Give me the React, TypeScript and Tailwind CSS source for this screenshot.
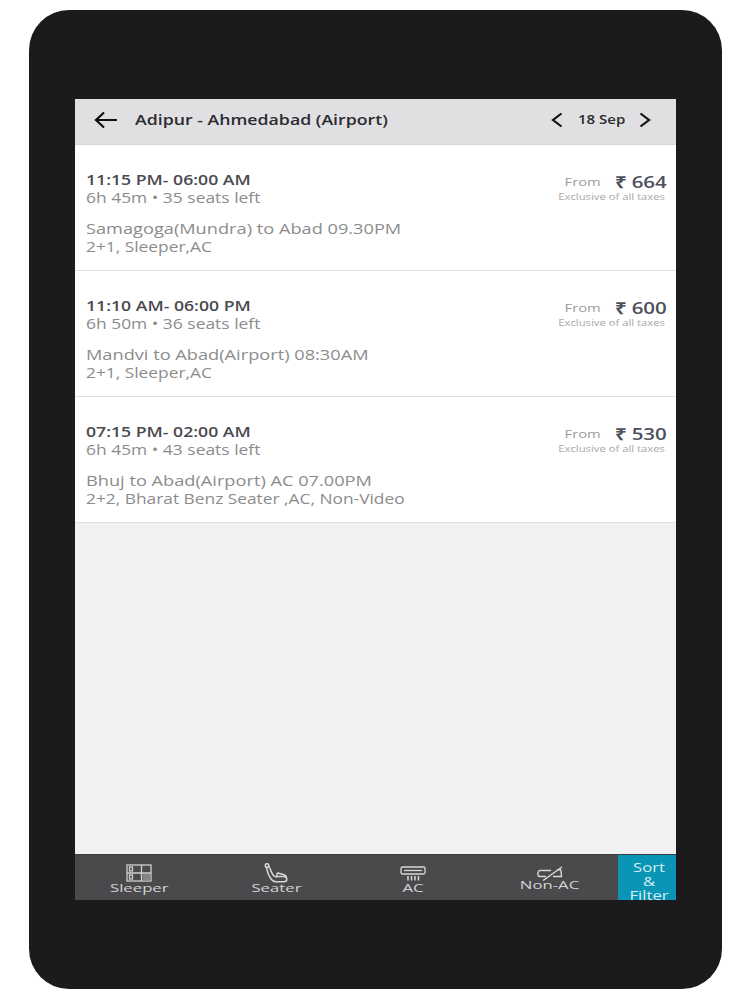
const trips = [
  {
    time: "11:15 PM- 06:00 AM",
    meta: "6h 45m • 35 seats left",
    name: "Samagoga(Mundra) to Abad 09.30PM",
    bus: "2+1, Sleeper,AC",
    price: "664",
  },
  {
    time: "11:10 AM- 06:00 PM",
    meta: "6h 50m • 36 seats left",
    name: "Mandvi to Abad(Airport) 08:30AM",
    bus: "2+1, Sleeper,AC",
    price: "600",
  },
  {
    time: "07:15 PM- 02:00 AM",
    meta: "6h 45m • 43 seats left",
    name: "Bhuj to Abad(Airport) AC 07.00PM",
    bus: "2+2, Bharat Benz Seater ,AC, Non-Video",
    price: "530",
  },
];

function SleeperIcon() {
  return (
    <svg width="26" height="18" viewBox="0 0 26 18" fill="none" stroke="#d0d0d0" strokeWidth="1.300">
      <rect x="1" y="1" width="24" height="16" />
      <path d="M1 9h24M15.500 1v16" />
      <rect x="3.500" y="3" width="3" height="4" />
      <rect x="3.500" y="11" width="3" height="4" />
      <rect x="16.500" y="10" width="8" height="6.500" fill="#858585" stroke="none" />
    </svg>
  );
}

function SeaterIcon() {
  return (
    <svg width="24" height="20" viewBox="0 0 24 20" fill="none" stroke="#d8d8d8" strokeWidth="1.500" strokeLinejoin="round">
      <circle cx="3" cy="2.500" r="1.800" />
      <path d="M2.500 5c.8 4 2 7.500 4.500 11 1.200 1.700 2.500 2.700 5 2.700h8c1.700 0 2.800-1.100 2.800-2.500 0-1.700-1.200-2.700-2.800-2.700h-6" />
      <path d="M5 3.500c1.500 3 2.500 6.500 4.500 9 1 1.200 2.500 1.500 4 1.500M13.500 14c-1-1.500-1-3.500.5-4l6 1.800c1.200.4 2 1.100 2.300 2.200" />
    </svg>
  );
}

function AcIcon() {
  return (
    <svg width="26" height="15" viewBox="0 0 26 15" fill="none" stroke="#d8d8d8" strokeWidth="1.300">
      <path d="M2.500 1h21c.8 0 1.500.7 1.500 1.500v4c0 .8-.7 1.500-1.500 1.500h-21C1.700 8 1 7.300 1 6.500v-4C1 1.700 1.700 1 2.500 1z" />
      <path d="M4 4.500h18" />
      <path d="M8 10v4.500M11.500 10v4.500M15 10v4.500M18.500 10v4.500" strokeWidth="1.500" />
    </svg>
  );
}

function NonAcIcon() {
  return (
    <svg width="26" height="15" viewBox="0 0 26 15" fill="none" stroke="#d8d8d8" strokeWidth="1.400">
      <path d="M3 4.500h11M3 4.500c-1 0-2 1-2 2v2c0 1 1 2 2 2h6M16 10.500h8.500L24 5c0-1-.5-1.500-1.500-1.500l-2.500.5" />
      <path d="M6 14.500 25 1" strokeWidth="1.500" />
    </svg>
  );
}

function TripRow({ trip }: { trip: (typeof trips)[number] }) {
  return (
    <div className="flex h-[126px] shrink-0 justify-between border-b border-[#dfdfe1] bg-white pl-[11px] pr-[9px] pt-[26px]">
      <div className="whitespace-nowrap">
        <p className="origin-left scale-x-[1.26] text-[14px] leading-[18px] font-semibold text-[#4a4a50]">{trip.time}</p>
        <p className="origin-left scale-x-[1.245] text-[14px] leading-[17px] text-[#8c8c8c]">{trip.meta}</p>
        <p className="mt-[14px] origin-left scale-x-[1.3] text-[14px] leading-[18px] text-[#8c8c8c]">{trip.name}</p>
        <p className="origin-left scale-x-[1.238] text-[14px] leading-[17px] text-[#8c8c8c]">{trip.bus}</p>
      </div>
      <div className="flex origin-right scale-x-[1.28] flex-col items-end whitespace-nowrap pt-[1px]">
        <div className="flex items-center">
          <span className="text-[11.500px] leading-[20px] text-[#9a9a9a]">From</span>
          <span className="ml-[11px] text-[16px] leading-[20px] font-semibold text-[#4d4f5c]">₹ {trip.price}</span>
        </div>
        <p className="mr-[1.500px] text-[8.800px] leading-[11px] text-[#a8a8a8]">Exclusive of all taxes</p>
      </div>
    </div>
  );
}

function FilterTab({ label, icon, raised }: { label: string; icon: React.ReactNode; raised?: boolean }) {
  return (
    <div className="flex w-[128px] shrink-0 flex-col items-center pt-[9px]">
      <div className="flex h-[18px] items-center">{icon}</div>
      <span
        className={
          raised
            ? "-mt-[5px] scale-x-[1.52] text-[11px] leading-[16px] text-[#d4d4d4]"
            : "-mt-[2px] scale-x-[1.52] text-[11px] leading-[16px] text-[#d4d4d4]"
        }
      >
        {label}
      </span>
    </div>
  );
}

export default function App() {
  return (
    <div className="h-[1000px] w-[750px] bg-white pl-[29px] pt-[10px] font-['Open_Sans',sans-serif]">
      <div className="h-[979px] w-[693px] rounded-[40px] bg-[#1b1b1d] pl-[46px] pt-[89px]">
        <div className="flex h-[801px] w-[601px] flex-col bg-[#f2f2f4]">
          <header className="flex h-[46px] shrink-0 items-center justify-between border-b border-[#d8d8da] bg-[#e0e0e2] pb-[3px] pl-[19px] pr-[25px]">
            <div className="flex items-center">
              <svg width="24" height="18" viewBox="0 0 24 18" fill="none" stroke="#111" strokeWidth="2.200">
                <path d="M23 9H2M10 1.500 2 9l8 7.500" />
              </svg>
              <span className="mb-[2px] ml-[17px] origin-left scale-x-[1.265] text-[14px] font-semibold whitespace-nowrap text-[#2b2b30]">
                Adipur - Ahmedabad (Airport)
              </span>
            </div>
            <div className="flex items-center">
              <svg width="12" height="16" viewBox="0 0 12 16" fill="none" stroke="#111" strokeWidth="2.200">
                <path d="M10.500 1.500 2 8l8.500 6.500" />
              </svg>
              <span className="ml-[15px] mr-[23px] origin-left scale-x-[1.25] text-[12px] font-semibold whitespace-nowrap text-[#2b2b30]">
                18 Sep
              </span>
              <svg width="12" height="16" viewBox="0 0 12 16" fill="none" stroke="#111" strokeWidth="2.200">
                <path d="M1.500 1.500 10 8l-8.500 6.500" />
              </svg>
            </div>
          </header>
          {trips.map((trip) => (
            <TripRow key={trip.name} trip={trip} />
          ))}
          <div className="flex-1" />
          <footer className="flex h-[46px] shrink-0 overflow-hidden border-t border-[#3c3c3e] bg-[#4a4a4c]">
            <div className="flex flex-1 gap-[9px]">
              <FilterTab label="Sleeper" icon={<SleeperIcon />} />
              <FilterTab label="Seater" icon={<SeaterIcon />} />
              <FilterTab label="AC" icon={<AcIcon />} />
              <FilterTab label="Non-AC" icon={<NonAcIcon />} raised />
            </div>
            <div className="w-[58px] shrink-0 bg-[#0a94b5] pl-[4px] pt-[6px] text-center text-[12px] leading-[14px] text-[#d9eef3]">
              <p className="scale-x-[1.39]">Sort</p>
              <p className="scale-x-[1.39]">&amp;</p>
              <p className="scale-x-[1.39]">Filter</p>
            </div>
          </footer>
        </div>
      </div>
    </div>
  );
}
